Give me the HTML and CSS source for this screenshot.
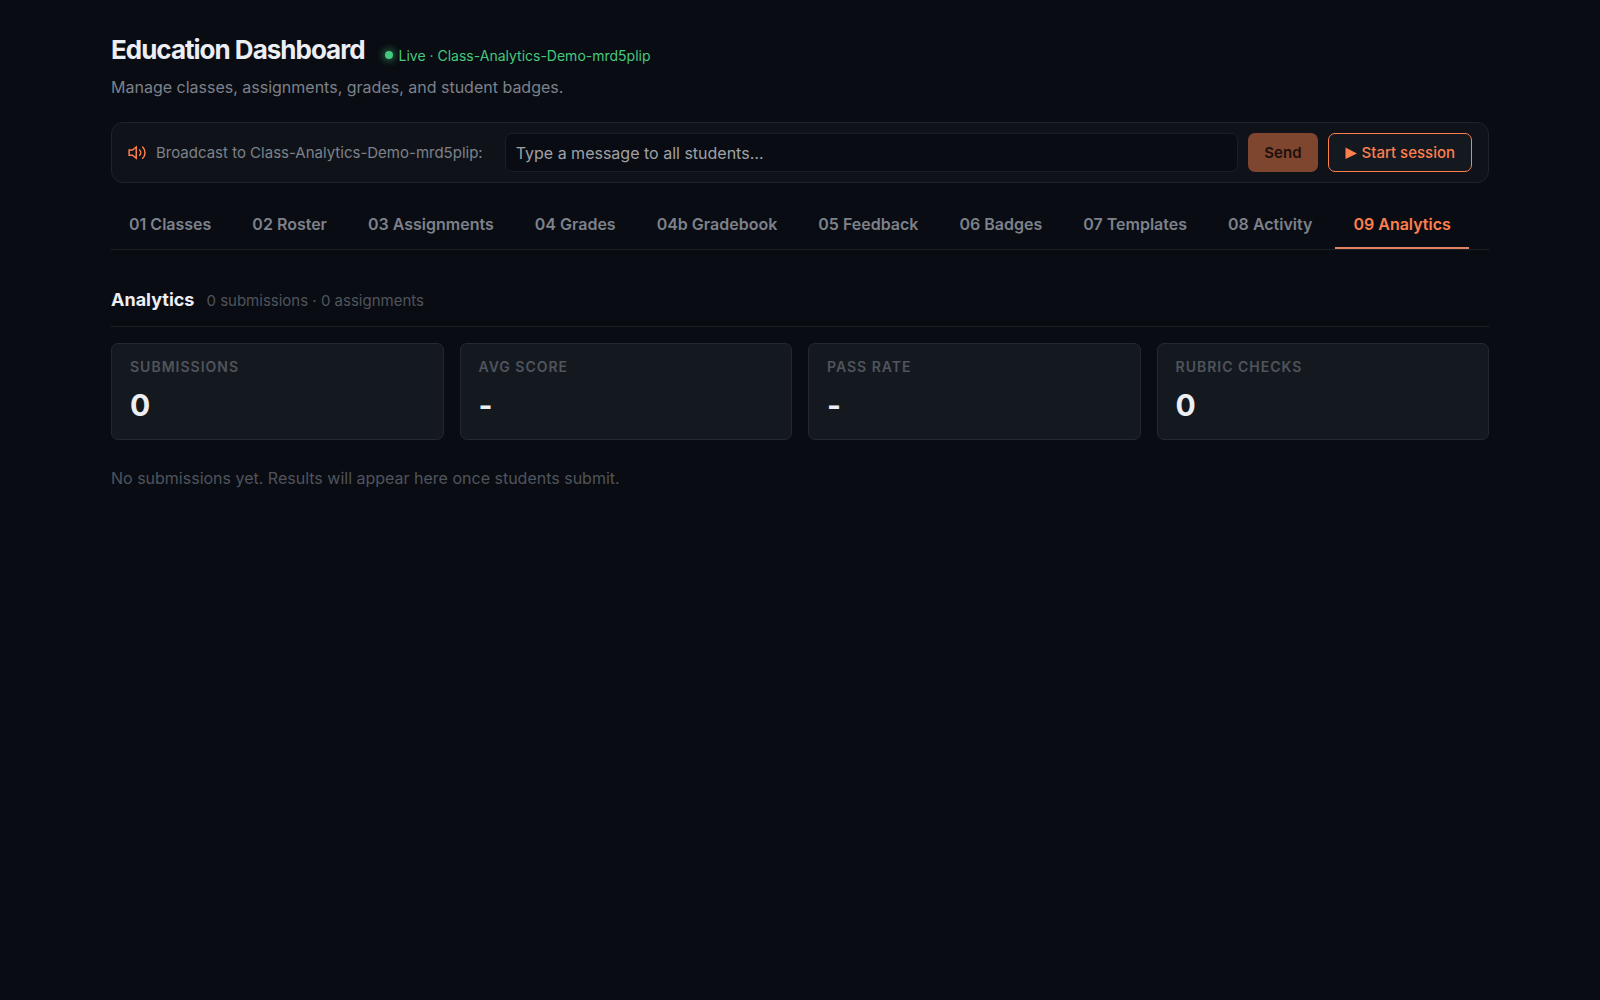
FILE: index.html
```html
<!DOCTYPE html>
<html lang="en">
<head>
  <meta charset="UTF-8" />
  <meta name="viewport" content="width=device-width, initial-scale=1.0"/>
  <title>Education Dashboard</title>
  <link rel="stylesheet" href="styles.css">
</head>
<body>
  <div class="page">
    <header>
      <div class="title-row">
        <h1>Education Dashboard</h1>
        <span class="live"><span class="live-dot"></span>Live · Class-Analytics-Demo-mrd5plip</span>
      </div>
      <p class="subtitle">Manage classes, assignments, grades, and student badges.</p>
    </header>

    <form class="broadcast">
      <svg class="icon" viewBox="0 0 24 24" fill="none" stroke="currentColor" stroke-width="2" stroke-linecap="round" aria-hidden="true">
        <path d="M11 4 6 8H1.500v7H6l5 4z"/>
        <path d="M15.500 8a5 5 0 0 1 0 7"/>
        <path d="M19.500 4a10.500 10.500 0 0 1 0 15"/>
      </svg>
      <label for="message">Broadcast to Class-Analytics-Demo-mrd5plip:</label>
      <input type="text" id="message" placeholder="Type a message to all students…">
      <button type="submit" class="btn send-btn" disabled>Send</button>
      <button type="button" class="btn session-btn">
        <svg class="play" viewBox="0 0 12 12" fill="currentColor" aria-hidden="true"><path d="M0.5 0.5 12 6.5 0.5 12z"/></svg>
        Start session
      </button>
    </form>

    <nav class="tabs">
      <button class="tab-button">01 Classes</button>
      <button class="tab-button">02 Roster</button>
      <button class="tab-button">03 Assignments</button>
      <button class="tab-button">04 Grades</button>
      <button class="tab-button">04b Gradebook</button>
      <button class="tab-button">05 Feedback</button>
      <button class="tab-button">06 Badges</button>
      <button class="tab-button">07 Templates</button>
      <button class="tab-button">08 Activity</button>
      <button class="tab-button active">09 Analytics</button>
    </nav>

    <main>
      <div class="section-head">
        <h2>Analytics</h2>
        <span>0 submissions · 0 assignments</span>
      </div>

      <div class="stats">
        <div class="stat">
          <div class="stat-label">Submissions</div>
          <div class="stat-value">0</div>
        </div>
        <div class="stat">
          <div class="stat-label">Avg score</div>
          <div class="stat-value">-</div>
        </div>
        <div class="stat">
          <div class="stat-label">Pass rate</div>
          <div class="stat-value">-</div>
        </div>
        <div class="stat">
          <div class="stat-label">Rubric checks</div>
          <div class="stat-value">0</div>
        </div>
      </div>

      <p class="empty">No submissions yet. Results will appear here once students submit.</p>
    </main>
  </div>
</body>
</html>
```

FILE: styles.css
```css
* { box-sizing: border-box; }
body { margin: 0; background: #090c13; color: #eceef4; font-family: Inter, "Liberation Sans", sans-serif; font-size: 16px; }
.page { max-width: 1442px; margin: 0 auto; padding: 32px; }
h1, h2, p { margin: 0; }

.title-row { display: flex; align-items: baseline; gap: 20px; }
h1 { font-size: 26px; line-height: 36px; font-weight: 700; letter-spacing: -1px; }
.live { display: flex; align-items: center; gap: 6px; color: #45c97c; font-size: 14px; }
.live-dot { width: 8px; height: 8px; border-radius: 50%; background: #45c97c; box-shadow: 0 0 8px #45c97c; }
.subtitle { margin-top: 6px; font-size: 16px; line-height: 26px; color: #7d818a; }

.broadcast { display: flex; align-items: center; gap: 10px; margin-top: 22px; padding: 10px 16px; background: #0f1319; border: 1px solid #20242a; border-radius: 12px; }
.icon { width: 18px; height: 18px; flex: none; color: #ff7f4d; }
.broadcast label { margin-right: 12px; font-size: 15px; color: #7d818a; white-space: nowrap; }
.broadcast input { flex: 1; min-width: 0; height: 39px; padding: 0 10px; background: #090c13; border: 1px solid #1b1f25; border-radius: 7px; color: #eceef4; font: inherit; }
.broadcast input::placeholder { color: #a0a2a6; opacity: 1; }
.btn { height: 39px; padding: 0 16px; border-radius: 7px; font: inherit; font-size: 15px; white-space: nowrap; cursor: pointer; }
.send-btn { background: #7e452f; border: none; color: #1d100c; font-weight: 600; }
.session-btn { display: flex; align-items: center; gap: 5px; background: #141920; border: 1px solid #ff7f4d; color: #ff7f4d; font-weight: 500; }
.play { width: 12px; height: 12px; }

.tabs { display: flex; gap: 5px; margin-top: 18px; border-bottom: 1px solid #1d2025; }
.tab-button { height: 48px; padding: 0 18px; background: none; border: none; border-bottom: 2px solid transparent; color: #7d818a; font: inherit; font-weight: 600; white-space: nowrap; cursor: pointer; }
.tab-button.active { color: #ff7f4d; border-bottom-color: #e08263; }

.section-head { display: flex; align-items: baseline; gap: 12px; margin-top: 36px; padding-bottom: 12px; border-bottom: 1px solid #1d2025; }
h2 { font-size: 18px; line-height: 28px; font-weight: 700; }
.section-head span { font-size: 15px; color: #50545c; }

.stats { display: grid; grid-template-columns: repeat(4, 1fr); gap: 16px; margin-top: 16px; }
.stat { padding: 14px 18px; background: #141920; border: 1px solid #25292f; border-radius: 7px; }
.stat-label { font-size: 14px; line-height: 18px; font-weight: 600; letter-spacing: 1px; text-transform: uppercase; color: #50545c; }
.stat-value { margin-top: 10px; font-size: 30px; line-height: 39px; font-weight: 700; }
.empty { margin-top: 24px; line-height: 28px; font-size: 16px; color: #50545c; }
```
